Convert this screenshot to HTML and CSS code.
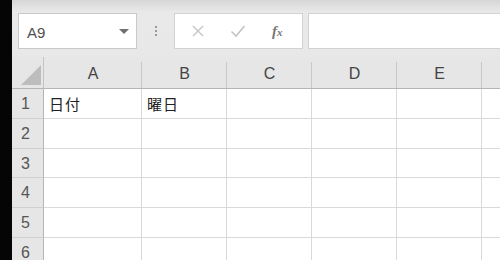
FILE: index.html
```html
<!DOCTYPE html>
<html lang="ja">
<head>
<meta charset="utf-8">
<link rel="stylesheet" href="styles.css">
</head>
<body>
<div class="app">
  <div class="edge"></div>
  <div class="main">
    <div class="toolbar">
      <div class="namebox">
        <span class="ref">A9</span>
        <span class="caret"></span>
      </div>
      <div class="grip"><i></i><i></i><i></i></div>
      <div class="fbuttons">
        <svg class="ic" width="14" height="14" viewBox="0 0 14 14"><path d="M2 2 L12 12 M12 2 L2 12" stroke="#c4c4c4" stroke-width="1.4" fill="none"/></svg>
        <svg class="ic" width="16" height="14" viewBox="0 0 16 14"><path d="M1.5 7.5 L6 12 L14.5 2" stroke="#c4c4c4" stroke-width="1.6" fill="none"/></svg>
        <span class="fx">f<small>x</small></span>
      </div>
      <div class="formula"></div>
    </div>
    <div class="sheet">
      <div class="corner"><span class="tri"></span></div>
      <div class="ch">A</div><div class="ch">B</div><div class="ch">C</div><div class="ch">D</div><div class="ch">E</div><div class="ch"></div>

      <div class="rh">1</div><div class="c">日付</div><div class="c">曜日</div><div class="c"></div><div class="c"></div><div class="c"></div><div class="c"></div>
      <div class="rh">2</div><div class="c"></div><div class="c"></div><div class="c"></div><div class="c"></div><div class="c"></div><div class="c"></div>
      <div class="rh">3</div><div class="c"></div><div class="c"></div><div class="c"></div><div class="c"></div><div class="c"></div><div class="c"></div>
      <div class="rh">4</div><div class="c"></div><div class="c"></div><div class="c"></div><div class="c"></div><div class="c"></div><div class="c"></div>
      <div class="rh">5</div><div class="c"></div><div class="c"></div><div class="c"></div><div class="c"></div><div class="c"></div><div class="c"></div>
      <div class="rh">6</div><div class="c"></div><div class="c"></div><div class="c"></div><div class="c"></div><div class="c"></div><div class="c"></div>
    </div>
  </div>
</div>
</body>
</html>
```
FILE: styles.css
```css
* { box-sizing: border-box; }
html, body { margin: 0; padding: 0; }
body {
  width: 500px;
  height: 260px;
  overflow: hidden;
  background: #e6e6e6;
  font-family: "Noto Sans CJK JP", "Noto Sans", sans-serif;
}
.app { display: flex; height: 260px; }
.edge { width: 12px; flex: none; background: #050505; }
.main { flex: 1; display: flex; flex-direction: column; overflow: hidden; }

.toolbar {
  height: 57px;
  flex: none;
  display: flex;
  align-items: flex-start;
  padding: 13px 0 0 6px;
  background: linear-gradient(#d6d6d6 0px, #e9e9e9 12px, #e8e8e8 100%);
}
.namebox {
  width: 119px;
  height: 36px;
  flex: none;
  background: #fff;
  border: 1px solid #c9c9c9;
  display: flex;
  align-items: center;
  justify-content: space-between;
  padding: 0 7px 0 8px;
}
.ref { font-family: "Liberation Sans", Arial, sans-serif; font-size: 15px; color: #505050; margin-top: 3px; }
.caret {
  width: 0; height: 0;
  border-left: 5px solid transparent;
  border-right: 5px solid transparent;
  border-top: 5px solid #707070;
}
.grip {
  width: 37px;
  flex: none;
  height: 36px;
  display: flex;
  flex-direction: column;
  align-items: center;
  justify-content: center;
  gap: 2px;
}
.grip i { display: block; width: 2px; height: 2px; background: #9a9a9a; }
.fbuttons {
  width: 129px;
  height: 36px;
  flex: none;
  background: #fff;
  border: 1px solid #d2d2d2;
  display: flex;
  align-items: center;
  padding-left: 16px;
  gap: 25px;
}
.fx {
  font-family: "Liberation Serif", "Times New Roman", serif;
  font-style: italic;
  font-weight: bold;
  font-size: 15px;
  color: #777;
  margin-left: 1px;
}
.fx small { font-size: 11px; }
.formula {
  margin-left: 5px;
  flex: 1;
  height: 36px;
  background: #fff;
  border: 1px solid #d2d2d2;
  border-right: none;
}

.sheet {
  display: grid;
  grid-template-columns: 32px 98px 85px 85px 85px 85px 40px;
  grid-template-rows: 32px 30px 30px 29px 30px 30px 30px;
}
.corner {
  position: relative;
  background: #e6e6e6;
  border-right: 1px solid #c4c4c4;
  border-bottom: 1px solid #b5b5b5;
}
.tri {
  position: absolute;
  right: 2px;
  bottom: 3px;
  width: 0; height: 0;
  border-left: 20px solid transparent;
  border-bottom: 20px solid #bdbdbd;
}
.ch {
  position: relative;
  background: #e6e6e6;
  border-bottom: 1px solid #b5b5b5;
  font-family: "Liberation Sans", Arial, sans-serif;
  font-size: 16px;
  color: #444;
  text-align: center;
  padding-top: 8px;
}
.ch::after {
  content: "";
  position: absolute;
  right: 0;
  top: 5px;
  bottom: 0;
  width: 1px;
  background: #c8c8c8;
}
.rh {
  background: #e6e6e6;
  border-right: 1px solid #b5b5b5;
  border-bottom: 1px solid #d0d0d0;
  font-family: "Liberation Sans", Arial, sans-serif;
  font-size: 16px;
  color: #555;
  text-align: center;
  padding-top: 6px;
  padding-right: 4px;
}
.c {
  background: #fff;
  border-right: 1px solid #d9d9d9;
  border-bottom: 1px solid #d9d9d9;
  font-size: 15px;
  color: #222;
  padding: 4px 0 0 5px;
  letter-spacing: 1px;
}
```
